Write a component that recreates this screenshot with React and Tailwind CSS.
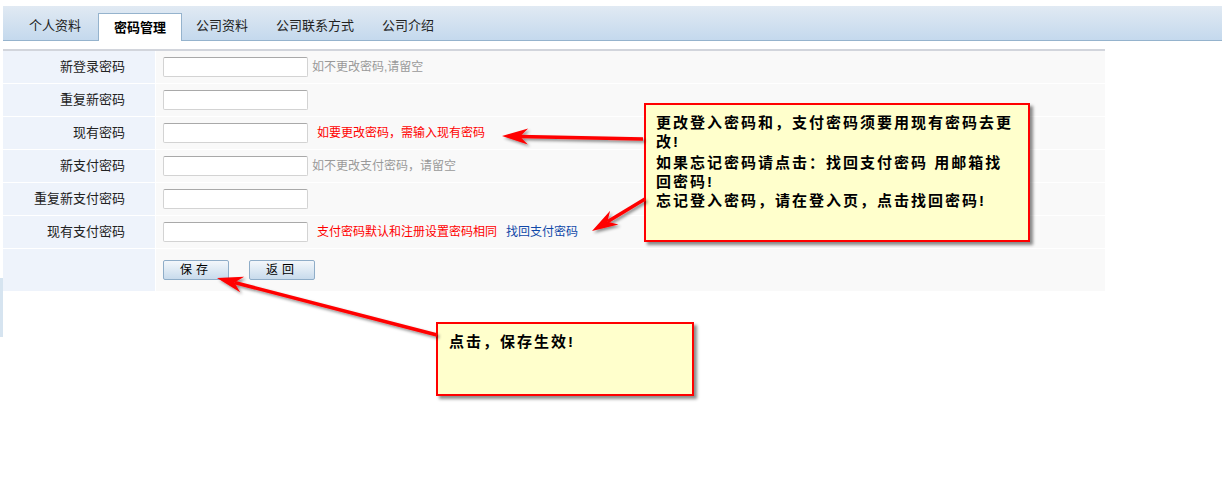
import React from "react";

const FONT = { fontFamily: '"Liberation Sans", "Noto Sans CJK SC", sans-serif' };

const tabs = ["个人资料", "密码管理", "公司资料", "公司联系方式", "公司介绍"];

// one row of the password form
const Row = ({ label, children }) => (
  <div className="flex h-[32px] gap-px">
    <div className="w-[152px] bg-[#eef3fb] flex items-center justify-end pr-[30px] text-[13px] text-[#222]">
      {label}
    </div>
    <div className="flex-1 bg-[#f9f9f9] flex items-center pl-[7px] text-[12px]">{children}</div>
  </div>
);

const Field = () => (
  <input
    type="password"
    className="w-[145px] h-[20px] bg-white border border-[#d3d3d3] border-t-[#a9a9a9] rounded-[2px] outline-none"
  />
);

const Btn = ({ children }) => (
  <button className="h-[20px] w-[66px] border border-[#8fadc8] rounded-[2px] bg-gradient-to-b from-[#f3f7fb] to-[#c8dbec] text-[12px] text-black tracking-[4px] leading-none">
    {children}
  </button>
);

const Arrow = ({ x1, y1, x2, y2 }) => {
  const a = Math.atan2(y2 - y1, x2 - x1);
  const L = 26;
  const W = 8;
  const pt = (d, w) => [
    x2 - Math.cos(a) * d - Math.sin(a) * w,
    y2 - Math.sin(a) * d + Math.cos(a) * w,
  ];
  const p = [[x2, y2], pt(L, W), pt(L - 8, 0), pt(L, -W)];
  const end = pt(L - 8, 0);
  return (
    <g filter="url(#sh)">
      <line x1={x1} y1={y1} x2={end[0]} y2={end[1]} stroke="#ff0000" strokeWidth="3.5" />
      <polygon points={p.map((q) => q.join(",")).join(" ")} fill="#ff0000" />
    </g>
  );
};

export default function App() {
  return (
    <div className="relative w-[1222px] h-[499px] bg-white overflow-hidden" style={FONT}>
      {/* tab bar */}
      <div className="mt-[6px] ml-[3px] h-[35px] border-b border-[#95b3cd] bg-gradient-to-b from-[#e1eaf3] to-[#c4d9ed] flex items-end pl-[12px]">
        {tabs.map((t, i) =>
          i === 1 ? (
            <div
              key={t}
              className="h-[28px] -mb-px ml-[3px] px-[15px] bg-white border border-b-0 border-[#95b3cd] flex items-center text-[13px] font-bold text-black"
            >
              {t}
            </div>
          ) : (
            <div key={t} className="h-[28px] px-[14px] flex items-center text-[13px] text-[#222]">
              {t}
            </div>
          )
        )}
      </div>

      {/* form */}
      <div className="mt-[8px] ml-[3px] w-[1102px] border-t-2 border-[#d2d5dc] bg-white flex flex-col gap-px">
        <Row label="新登录密码">
          <Field />
          <span className="ml-[4px] text-[#999]">如不更改密码,请留空</span>
        </Row>
        <Row label="重复新密码">
          <Field />
        </Row>
        <Row label="现有密码">
          <Field />
          <span className="ml-[9px] text-[#ff0000]">如要更改密码，需输入现有密码</span>
        </Row>
        <Row label="新支付密码">
          <Field />
          <span className="ml-[4px] text-[#999]">如不更改支付密码，请留空</span>
        </Row>
        <Row label="重复新支付密码">
          <Field />
        </Row>
        <Row label="现有支付密码">
          <Field />
          <span className="ml-[9px] text-[#ff0000]">支付密码默认和注册设置密码相同</span>
          <a className="ml-[9px] text-[#1048a8] cursor-pointer">找回支付密码</a>
        </Row>
        <div className="flex h-[42px] gap-px">
          <div className="w-[152px] bg-[#eef3fb]" />
          <div className="flex-1 bg-[#f9f9f9] flex items-center pl-[7px] gap-[20px]">
            <Btn>保存</Btn>
            <Btn>返回</Btn>
          </div>
        </div>
      </div>

      {/* left edge strip */}
      <div className="absolute left-0 top-[278px] w-[3px] h-[59px] bg-[#d6e4f0]" />

      {/* annotations */}
      <div className="absolute left-[644px] top-[103px] w-[386px] h-[139px] border-2 border-[#ff0000] bg-[#ffffcc] shadow-[3px_3px_3px_rgba(0,0,0,0.45)] pl-[10px] pt-[8px] text-[15px] font-bold text-black leading-[19px] tracking-[2px]">
        <div>更改登入密码和，支付密码须要用现有密码去更</div>
        <div>改!</div>
        <div className="mt-[2px]">如果忘记密码请点击：找回支付密码 用邮箱找</div>
        <div>回密码!</div>
        <div>忘记登入密码，请在登入页，点击找回密码!</div>
      </div>

      <div className="absolute left-[436px] top-[322px] w-[258px] h-[74px] border-2 border-[#ff0000] bg-[#ffffcc] shadow-[3px_3px_3px_rgba(0,0,0,0.45)] pl-[11px] pt-[7px] text-[15px] font-bold text-black tracking-[2px]">
        点击，保存生效!
      </div>

      <svg className="absolute inset-0 pointer-events-none" width="1222" height="499">
        <defs>
          <filter id="sh" x="-20%" y="-20%" width="140%" height="140%">
            <feDropShadow dx="2" dy="2" stdDeviation="1.5" floodColor="#000" floodOpacity="0.45" />
          </filter>
        </defs>
        <Arrow x1={643} y1={139} x2={502} y2={136} />
        <Arrow x1={645} y1={199} x2={592} y2={231} />
        <Arrow x1={437} y1={335} x2={217} y2={278} />
      </svg>
    </div>
  );
}
